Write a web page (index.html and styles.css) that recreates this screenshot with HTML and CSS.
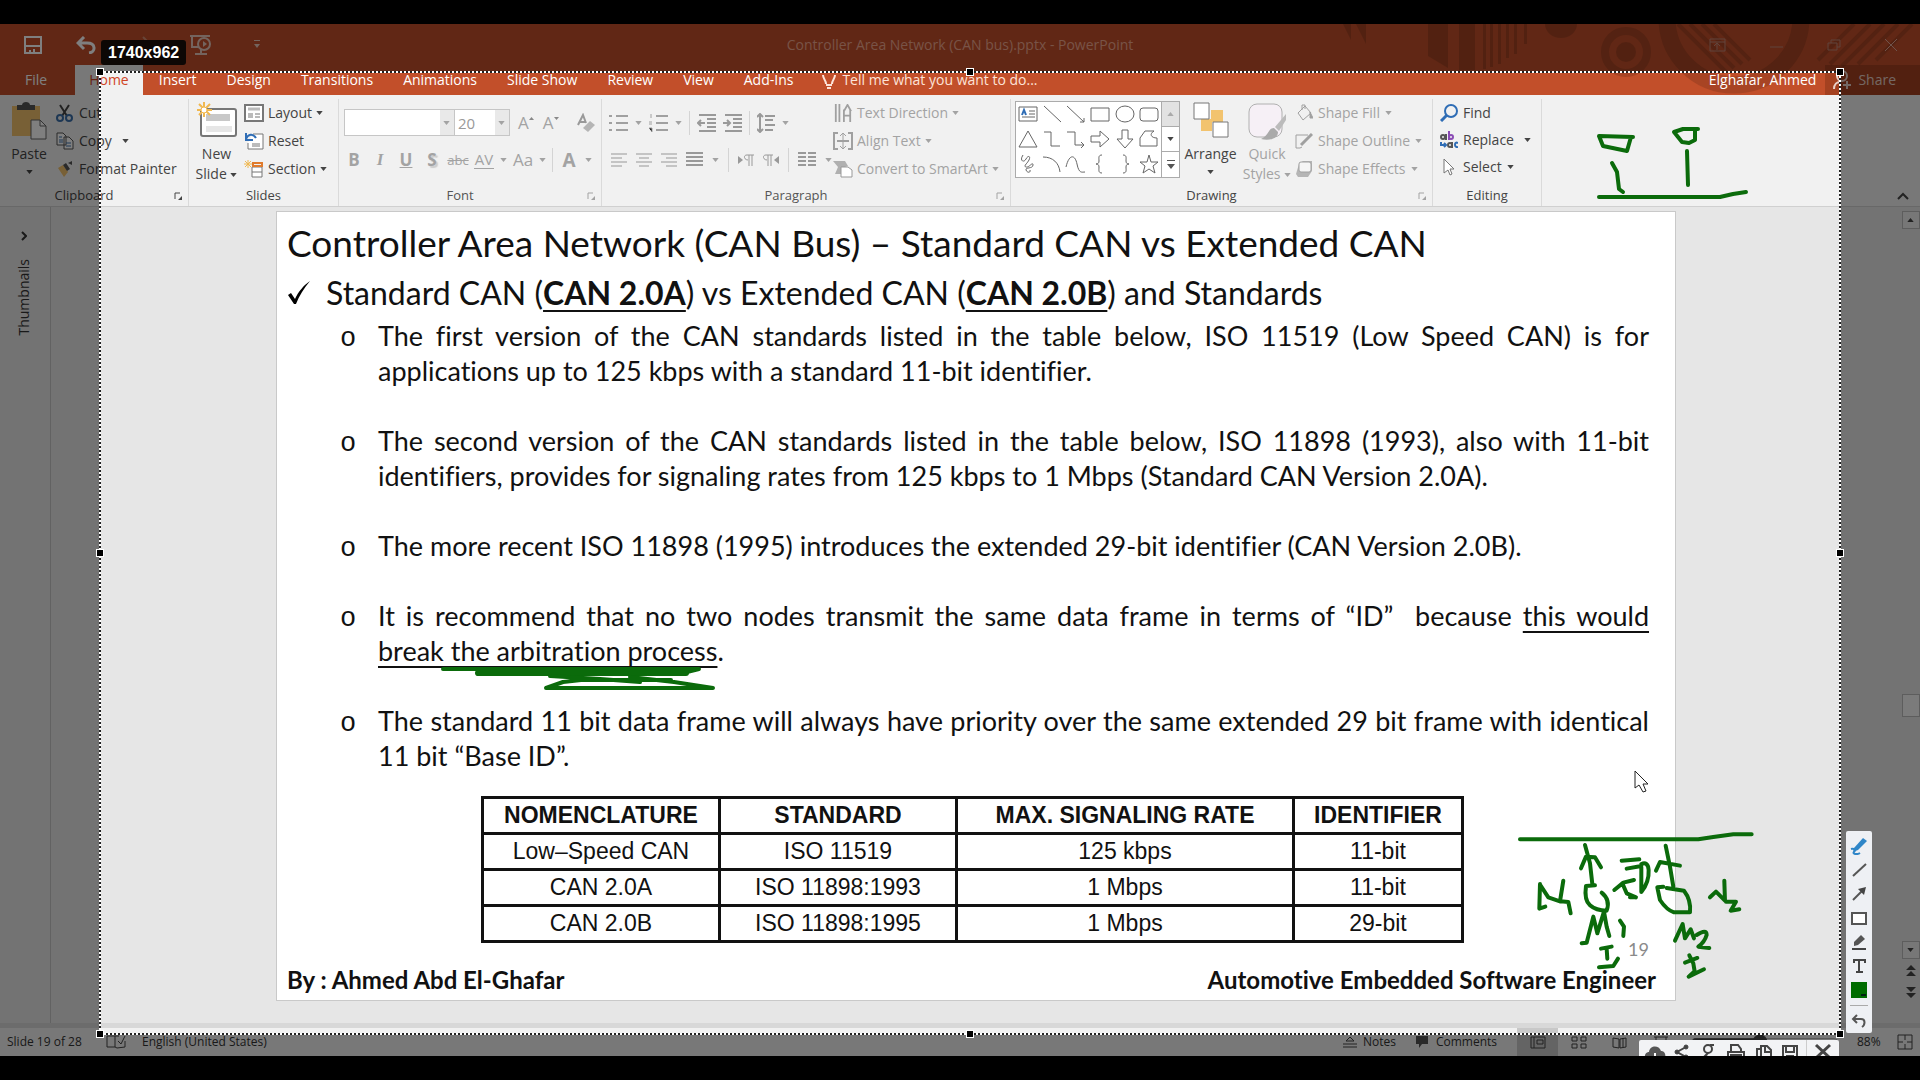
FILE: index.html
```html
<!DOCTYPE html>
<html lang="en">
<head>
<meta charset="utf-8">
<title>Controller Area Network (CAN bus).pptx - PowerPoint</title>
<link rel="stylesheet" href="styles.css">
</head>
<body>
<svg class="defs" aria-hidden="true">
  <symbol id="caret" viewBox="0 0 8 5"><path d="M0 0h8L4 5z" fill="currentColor"/></symbol>
  <symbol id="launcher" viewBox="0 0 8 8"><path d="M1 7V1h5" fill="none" stroke="currentColor"/><path d="M8 4v4H4z" fill="currentColor"/></symbol>
</svg>
<div class="app">
  <header class="titlebar">
    <svg class="decor" viewBox="0 0 600 71" width="600" height="71" aria-hidden="true">
      <g fill="#8f3a1f" opacity=".55">
        <path d="M23 0h8v16zM36 0h10v20zM108 0h20v44l-20-12zM139 0h16v46h-16z"/>
        <path d="M163 0h3v45h-3zM170 0h3v43h-3zM178 0h3v40h-3zM186 0h3v34h-3zM194 0h3v30h-3zM204 0h3v20h-3z"/>
        <path d="M225 0h32a16 14 0 0 1-32 0z"/>
        <circle cx="306" cy="28" r="10"/>
      </g>
      <g fill="none" stroke="#8f3a1f" opacity=".5">
        <circle cx="306" cy="28" r="21" stroke-width="8"/>
        <circle cx="414" cy="-6" r="67" stroke-width="17"/>
        <path d="M358 0l48 48M370 0l44 44M382 0l40 40M394 0l36 36M498 36l36-36M510 40l40-40M522 42l42-42M538 40l40-40M556 36l36-36" stroke-width="4"/>
      </g>
    </svg>
    <div class="caption">
      <div class="quick">
        <button aria-label="Save"><svg width="18" height="18" viewBox="0 0 18 18" fill="none" stroke="#fff" stroke-width="2"><path d="M1 1h16v16H1zM1 10h16"/><path d="M6 14v3M10 13v4" /></svg></button>
        <button aria-label="Undo"><svg width="20" height="18" viewBox="0 0 20 18" fill="none" stroke="#fff" stroke-width="3"><path d="M2 7h9c9 0 9 9 2 10M8 1L2 7l6 6"/></svg></button>
        <button aria-label="Redo"><svg width="20" height="18" viewBox="0 0 20 18" fill="none" stroke="#d08a70" stroke-width="2"><path d="M18 6H9c-8 0-8 9-2 10M13 1l5 5-5 5"/></svg></button>
        <button aria-label="Start from beginning"><svg width="22" height="20" viewBox="0 0 22 20" fill="none" stroke="#e8c8bc" stroke-width="2"><path d="M0 1h20M2 1v11h7M5 19h12M11 14v5"/><circle cx="14" cy="9" r="6"/><path d="M13 6l4 3-4 3z" fill="#e8c8bc" stroke="none"/></svg></button>
        <button aria-label="Customize toolbar"><svg width="6" height="9" viewBox="0 0 6 9"><path d="M0 0h6v1H0zM0 4h6L3 8z" fill="#e8c8bc"/></svg></button>
      </div>
      <div class="doc-name">Controller Area Network (CAN bus).pptx - PowerPoint</div>
      <div class="window-buttons">
        <button aria-label="Ribbon display options"><svg width="17" height="14" viewBox="0 0 17 14" fill="none" stroke="#c08878" stroke-width="1"><path d="M1 1h15v12H1zM1 4h15M8 12V6M5 8l3-3 3 3"/></svg></button>
        <button aria-label="Minimize"><svg width="13" height="14" viewBox="0 0 13 14" stroke="#c08878"><path d="M0 9h13"/></svg></button>
        <button aria-label="Restore"><svg width="14" height="14" viewBox="0 0 14 14" fill="none" stroke="#c08878"><path d="M1 5h9v7H1zM4 5V2h9v7h-3"/></svg></button>
        <button aria-label="Close"><svg width="12" height="12" viewBox="0 0 12 12" stroke="#e0a898"><path d="M0 0l12 12M12 0L0 12"/></svg></button>
      </div>
    </div>
    <nav class="tabs">
      <button class="tab file">File</button>
      <button class="tab active">Home</button>
      <button class="tab">Insert</button>
      <button class="tab">Design</button>
      <button class="tab">Transitions</button>
      <button class="tab">Animations</button>
      <button class="tab">Slide Show</button>
      <button class="tab">Review</button>
      <button class="tab">View</button>
      <button class="tab">Add-Ins</button>
      <button class="tab tell"><svg width="14" height="20" viewBox="0 0 14 20" fill="none" stroke="#fde3d8" stroke-width="2"><path d="M4 14c0-4-3-5-3-9M10 14c0-4 3-5 3-9M4 15h6M5 18h4"/></svg>Tell me what you want to do...</button>
      <span class="account">Elghafar, Ahmed</span>
      <button class="share"><svg width="18" height="20" viewBox="0 0 18 20" fill="none" stroke="#e8d0c8" stroke-width="2"><circle cx="9" cy="6" r="5"/><path d="M1 19c0-5 3-7 6-7M14 11v8M10 15h8"/></svg>Share</button>
    </nav>
  </header>

  <div class="ribbon">
    <section class="group g-clipboard">
      <div class="group-body">
        <button class="big"><svg width="35" height="38" viewBox="0 0 35 38"><path d="M0 4h28v30H0z" fill="#f0c06c"/><path d="M5 3h5c0-4 8-4 8 0h5v5H5z" fill="#555"/><path d="M19 18h9l6 6v13H19z" fill="#fff" stroke="#666" stroke-width="1"/><path d="M28 18v6h6" fill="none" stroke="#666"/></svg><span>Paste</span><svg class="caret"><use href="#caret"/></svg></button>
        <div class="stack">
          <button><svg class="ic" viewBox="0 0 18 18" fill="none" stroke="#444" stroke-width="2"><path d="M4 1l7 11M13 1L6 12"/><circle cx="4" cy="14" r="3" stroke="#3b6ea8"/><circle cx="13" cy="14" r="3" stroke="#3b6ea8"/></svg>Cut</button>
          <button><svg class="ic" viewBox="0 0 18 18" fill="#fff" stroke="#555"><path d="M1 1h6l3 3v9H1zM8 5h5l4 4v8H8z"/><path d="M3 5h3M3 8h4M3 10h4M10 11h5M10 14h5" stroke="#3b6ea8"/></svg>Copy<svg class="caret sp"><use href="#caret"/></svg></button>
          <button><svg class="ic" viewBox="0 0 18 18"><path d="M2 8l5-3 5 7-4 5z" fill="#f0c06c"/><path d="M7 5l3-2 4 6-3 2zM12 3l4-2v4z" fill="#555"/></svg>Format Painter</button>
        </div>
      </div>
      <footer class="has-launch"><span>Clipboard</span><svg class="launch"><use href="#launcher"/></svg></footer>
    </section>

    <section class="group g-slides">
      <div class="group-body">
        <button class="big"><svg width="40" height="38" viewBox="0 0 40 38" fill="none"><rect x="4" y="7" width="35" height="27" rx="2" fill="#fff" stroke="#777" stroke-width="2"/><path d="M9 12h24v7H9z" fill="#c8c8c8"/><path d="M9 24h26v6H9z" fill="#e6e6e6"/><path d="M7 0v15M0 8h15M2 2l11 11M13 2L2 13" stroke="#f0b850" stroke-width="2"/><circle cx="7" cy="8" r="3" fill="#fff" stroke="#f0b850"/></svg><span>New<br>Slide <svg class="caret"><use href="#caret"/></svg></span></button>
        <div class="stack">
          <button><svg class="ic w20" viewBox="0 0 20 18" fill="none" stroke="#777"><rect x="1" y="1" width="18" height="16" fill="#fff" stroke-width="2"/><path d="M4 5h12" stroke="#bbb" stroke-width="3"/><path d="M4 9h5v5H4z" fill="#bbb" stroke="none"/><path d="M11 10h5M11 13h5"/></svg>Layout<svg class="caret"><use href="#caret"/></svg></button>
          <button><svg class="ic w20" viewBox="0 0 20 18" fill="none" stroke="#777"><path d="M9 2h10v15H4v-6" fill="#fff" stroke-width="1"/><path d="M8 11h8v4H8z" fill="#bbb" stroke="none"/><path d="M2 1v7h7M2 7c2-5 7-6 10-1" stroke="#2f6db5" stroke-width="2"/></svg>Reset</button>
          <button><svg class="ic w20" viewBox="0 0 20 18" fill="none" stroke="#777"><path d="M8 7h10v10H8zM8 12h10" fill="#fff"/><path d="M9 3h9v3H9z" stroke="#e07b2c" stroke-width="2"/><path d="M4 0v8M0 4h8M1 1l6 6M7 1L1 7" stroke="#f0b850"/></svg>Section<svg class="caret"><use href="#caret"/></svg></button>
        </div>
      </div>
      <footer><span>Slides</span></footer>
    </section>

    <section class="group g-font off">
      <div class="tools">
        <div class="tool-row">
          <label class="combo wide"><input aria-label="Font name" value=""><svg class="caret"><use href="#caret"/></svg></label>
          <label class="combo"><input aria-label="Font size" value="20"><svg class="caret"><use href="#caret"/></svg></label>
          <button class="t grow" aria-label="Increase font size">A<svg width="5" height="3" viewBox="0 0 5 3"><path d="M0 3h5L2.500 0z" fill="#888"/></svg></button>
          <button class="t grow" aria-label="Decrease font size">A<svg width="5" height="3" viewBox="0 0 5 3"><path d="M0 0h5L2.500 3z" fill="#888"/></svg></button>
          <i class="bar"></i>
          <button class="t" aria-label="Clear formatting"><svg width="18" height="20" viewBox="0 0 18 20"><path d="M1 12L6 2l3 8M2 9h6" fill="none" stroke="#999" stroke-width="2"/><path d="M6 15l7-7 5 4-7 7z" fill="#b5b5b5"/></svg></button>
        </div>
        <div class="tool-row letters">
          <button class="l"><b>B</b></button>
          <button class="l serif"><b><i>I</i></b></button>
          <button class="l"><b><u>U</u></b></button>
          <button class="l shadow"><b>S</b></button>
          <button class="l small"><s>abc</s></button>
          <button class="l av">AV</button><svg class="caret"><use href="#caret"/></svg>
          <button class="l">Aa</button><svg class="caret"><use href="#caret"/></svg>
          <i class="bar"></i>
          <button class="l fc"><b>A</b></button><svg class="caret"><use href="#caret"/></svg>
        </div>
      </div>
      <footer class="has-launch"><span>Font</span><svg class="launch"><use href="#launcher"/></svg></footer>
    </section>

    <section class="group g-para off">
      <div class="group-body">
        <div class="tools">
          <div class="tool-row icons">
            <svg width="19" height="18" viewBox="0 0 19 18" stroke="#a0a0a0" stroke-width="2"><path d="M0 2h3M7 2h12M0 9h3M7 9h12M0 16h3M7 16h12"/></svg><svg class="caret"><use href="#caret"/></svg>
            <svg width="19" height="18" viewBox="0 0 19 18" stroke="#a0a0a0" stroke-width="2"><path d="M7 2h12M7 9h12M7 16h12"/><path d="M2 0v4M0 8h3M0 10h3M0 14h3v4" stroke-width="1"/></svg><svg class="caret"><use href="#caret"/></svg>
            <i class="bar"></i>
            <svg width="19" height="18" viewBox="0 0 19 18" fill="none" stroke="#999" stroke-width="2"><path d="M2 1h17M10 5h9M10 9h9M10 13h9M2 17h17M8 9H1M4 6L1 9l3 3"/></svg>
            <svg width="19" height="18" viewBox="0 0 19 18" fill="none" stroke="#999" stroke-width="2"><path d="M2 1h17M10 5h9M10 9h9M10 13h9M2 17h17M0 9h7M4 6l3 3-3 3"/></svg>
            <i class="bar"></i>
            <svg width="18" height="20" viewBox="0 0 18 20" fill="none" stroke="#999" stroke-width="2"><path d="M8 3h10M8 7h8M8 12h10M8 17h8M3 1v18M0 4l3-3 3 3M0 16l3 3 3-3"/></svg><svg class="caret"><use href="#caret"/></svg>
          </div>
          <div class="tool-row icons second">
            <svg width="16" height="14" viewBox="0 0 16 14" stroke="#c4c4c4" stroke-width="2"><path d="M0 1h16M0 5h11M0 9h16M0 13h11"/></svg>
            <svg width="16" height="14" viewBox="0 0 16 14" stroke="#c4c4c4" stroke-width="2"><path d="M0 1h16M3 5h10M0 9h16M3 13h10"/></svg>
            <svg width="16" height="14" viewBox="0 0 16 14" stroke="#c4c4c4" stroke-width="2"><path d="M0 1h16M5 5h11M0 9h16M5 13h11"/></svg>
            <svg width="17" height="15" viewBox="0 0 17 15" stroke="#999" stroke-width="2"><path d="M0 1h17M0 5h17M0 9h17M0 13h17"/></svg><svg class="caret"><use href="#caret"/></svg>
            <i class="bar"></i>
            <svg width="16" height="12" viewBox="0 0 16 12"><path d="M0 2l5 4-5 4z" fill="#999"/><path d="M11 12V1M14 12V1M16 1H9c-4 0-3 5 1 5" stroke="#999" fill="none"/></svg>
            <svg width="16" height="12" viewBox="0 0 16 12"><path d="M16 2l-5 4 5 4z" fill="#999"/><path d="M5 12V1M8 12V1M10 1H3c-4 0-3 5 1 5" stroke="#999" fill="none"/></svg>
            <i class="bar"></i>
            <svg width="18" height="15" viewBox="0 0 18 15" stroke="#999" stroke-width="2"><path d="M0 1h8M0 5h8M0 9h8M0 13h8M10 1h8M10 5h8M10 9h8M10 13h8"/></svg><svg class="caret"><use href="#caret"/></svg>
          </div>
        </div>
        <div class="stack">
          <button><svg class="ic w20" viewBox="0 0 20 20" fill="none" stroke="#a0a0a0"><path d="M2 0v20M6 0v20M11 6v14M18 6v14M11 13h7M11 8l4-7 4 7" stroke-width="2"/></svg>Text Direction<svg class="caret"><use href="#caret"/></svg></button>
          <button><svg class="ic w20" viewBox="0 0 20 18" fill="none" stroke="#a0a0a0"><path d="M5 1H1v16h4M15 1h4v16h-4M4 9h12" stroke-width="2"/><path d="M10 1v16M7 4l3-3 3 3M7 14l3 3 3-3"/></svg>Align Text<svg class="caret"><use href="#caret"/></svg></button>
          <button><svg class="ic w20" viewBox="0 0 20 18"><path d="M0 1h12l3 5-6 2v6H2L5 7z" fill="#b0b0b0"/><path d="M8 7h7l4 3v7H8z" fill="#fff" stroke="#999"/></svg>Convert to SmartArt<svg class="caret"><use href="#caret"/></svg></button>
        </div>
      </div>
      <footer class="has-launch"><span>Paragraph</span><svg class="launch"><use href="#launcher"/></svg></footer>
    </section>

    <section class="group g-draw">
      <div class="group-body">
        <div class="gallery">
          <div class="shapes">
            <svg viewBox="0 0 24 24"><path d="M3 5h18v14H3z" /><path d="M13 9h6M13 12h6M6 15h13"/><path d="M6 13l2-5 2 5" stroke="#2f6db5" stroke-width="2"/></svg>
            <svg viewBox="0 0 24 24"><path d="M4 4l17 16"/></svg>
            <svg viewBox="0 0 24 24"><path d="M3 4l17 16M20 16v4h-4"/></svg>
            <svg viewBox="0 0 24 24"><path d="M3 6h18v13H3z"/></svg>
            <svg viewBox="0 0 24 24"><ellipse cx="12" cy="12" rx="9" ry="8"/></svg>
            <svg viewBox="0 0 24 24"><rect x="3" y="6" width="18" height="13" rx="3"/></svg>
            <svg viewBox="0 0 24 24"><path d="M12 4l9 16H3z"/></svg>
            <svg viewBox="0 0 24 24"><path d="M4 5h7v14h9"/></svg>
            <svg viewBox="0 0 24 24"><path d="M3 5h8v13h9M17 15l3 3-3 3"/></svg>
            <svg viewBox="0 0 24 24"><path d="M3 9h9V4l9 8-9 8v-5H3z"/></svg>
            <svg viewBox="0 0 24 24"><path d="M9 3v9H4l8 9 8-9h-5V3z"/></svg>
            <svg viewBox="0 0 24 24"><path d="M3 19V11l5-7h9c-5 3-3 7 3 7v8z"/></svg>
            <svg viewBox="0 0 24 24"><path d="M7 3c-4 6 1 8 3 4s5-3 3 1-6 6-3 7 7-6 7-2-8 2-7 5 5 3 4 0"/></svg>
            <svg viewBox="0 0 24 24"><path d="M3 5c10 0 16 6 17 15"/></svg>
            <svg viewBox="0 0 24 24"><path d="M2 15C5 2 11 2 13 12s5 8 8 8"/></svg>
            <svg viewBox="0 0 24 24"><path d="M14 3c-4 0-3 3-3 6 0 2-1 3-3 3 2 0 3 1 3 3 0 3-1 6 3 6"/></svg>
            <svg viewBox="0 0 24 24"><path d="M10 3c4 0 3 3 3 6 0 2 1 3 3 3-2 0-3 1-3 3 0 3 1 6-3 6"/></svg>
            <svg viewBox="0 0 24 24"><path d="M12 3l2 7h7l-5 4 2 7-6-4-6 4 2-7-5-4h7z"/></svg>
          </div>
          <div class="gallery-scroll">
            <button aria-label="Scroll up" disabled><svg class="caret flip"><use href="#caret"/></svg></button>
            <button aria-label="Scroll down"><svg class="caret"><use href="#caret"/></svg></button>
            <button aria-label="More shapes"><svg width="8" height="9" viewBox="0 0 8 9"><path d="M0 0h8v1H0zM0 4h8L4 9z" fill="#555"/></svg></button>
          </div>
        </div>
        <button class="big arrange"><svg width="36" height="38" viewBox="0 0 36 38"><path d="M18 8h12v12H18zM8 17h11v12H8z" fill="#f2c36e"/><path d="M1 1h15v16H1zM20 20h15v15H20z" fill="#fff" stroke="#777"/></svg><span>Arrange</span><svg class="caret"><use href="#caret"/></svg></button>
        <button class="big quickstyles off"><svg width="40" height="38" viewBox="0 0 40 38"><rect x="2" y="2" width="33" height="33" rx="8" fill="#f6f0f6" stroke="#b0b0b0"/><path d="M39 12L28 25l4 4 7-11z" fill="#bbb"/><path d="M27 26c-6 0-5 8-13 11 8 2 17 0 17-7z" fill="#aaa"/></svg><span>Quick<br>Styles <svg class="caret"><use href="#caret"/></svg></span></button>
        <div class="stack off">
          <button><svg class="ic" viewBox="0 0 18 18" fill="none" stroke="#a0a0a0"><path d="M3 9l7-7 6 7-8 7zM7 6V1h3v4"/><path d="M15 8l3 6h-3z" fill="#a0a0a0"/></svg>Shape Fill<svg class="caret"><use href="#caret"/></svg></button>
          <button><svg class="ic" viewBox="0 0 18 18" fill="none" stroke="#a0a0a0"><path d="M13 3H1v13h4l2-1"/><path d="M6 13L17 2" stroke-width="3"/></svg>Shape Outline<svg class="caret"><use href="#caret"/></svg></button>
          <button><svg class="ic" viewBox="0 0 18 18"><path d="M4 4l4-3h9v10l-4 6H3L1 14z" fill="#b5b5b5"/><rect x="4" y="2" width="12" height="10" rx="2" fill="#f5f5f5" stroke="#a0a0a0"/></svg>Shape Effects<svg class="caret"><use href="#caret"/></svg></button>
        </div>
      </div>
      <footer class="has-launch"><span>Drawing</span><svg class="launch dim"><use href="#launcher"/></svg></footer>
    </section>

    <section class="group g-edit">
      <div class="group-body">
        <div class="stack">
          <button><svg class="ic" viewBox="0 0 18 18" fill="none" stroke="#2f6db5" stroke-width="2"><circle cx="11" cy="7" r="6"/><path d="M7 11l-6 6" stroke-width="3"/></svg>Find</button>
          <button><svg class="ic" viewBox="0 0 18 18" fill="none" stroke-width="2"><g stroke="#555"><circle cx="3" cy="6" r="2"/><path d="M6 3v6"/><circle cx="10" cy="14" r="2"/><path d="M12 11v6"/></g><path d="M9 0v9" stroke="#8a4bb5"/><circle cx="11" cy="6" r="2" stroke="#8a4bb5"/><path d="M18 12c-4-2-4 5 0 4" stroke="#2f6db5"/><path d="M1 11v3h5M4 12l2 2-2 2" stroke="#2f6db5"/></svg>Replace<svg class="caret sp"><use href="#caret"/></svg></button>
          <button><svg class="ic" viewBox="0 0 18 18"><path d="M4 1v14l4-3 2 5 2-1-2-5h4z" fill="#fff" stroke="#777"/></svg>Select<svg class="caret"><use href="#caret"/></svg></button>
        </div>
      </div>
      <footer><span>Editing</span></footer>
    </section>
    <button class="collapse" aria-label="Collapse the ribbon"><svg width="12" height="8" viewBox="0 0 12 8" fill="none" stroke="#444" stroke-width="2"><path d="M1 7l5-5 5 5"/></svg></button>
  </div>

  <main class="workspace">
    <aside class="thumbs">
      <svg width="6" height="10" viewBox="0 0 6 10" fill="none" stroke="#333" stroke-width="2"><path d="M1 1l4 4-4 4"/></svg>
      <span>Thumbnails</span>
    </aside>
    <div class="stage">
      <article class="slide">
        <h1>Controller Area Network (CAN Bus) – Standard CAN vs Extended CAN</h1>
        <h2><svg width="24" height="24" viewBox="0 0 24 24" aria-hidden="true"><path d="M1 14l3-2 4 6C11 11 17 4 23 0 17 7 12 15 9 23H7z"/></svg><span>Standard CAN (<b>CAN 2.0A</b>) vs Extended CAN (<b>CAN 2.0B</b>) and Standards</span></h2>
        <ul>
          <li>The first version of the CAN standards listed in the table below, ISO 11519 (Low Speed CAN) is for applications up to 125 kbps with a standard 11-bit identifier.</li>
          <li>The second version of the CAN standards listed in the table below, ISO 11898 (1993), also with 11-bit identifiers, provides for signaling rates from 125 kbps to 1 Mbps (Standard CAN Version 2.0A).</li>
          <li>The more recent ISO 11898 (1995) introduces the extended 29-bit identifier (CAN Version 2.0B).</li>
          <li>It is recommend that no two nodes transmit the same data frame in terms of “ID”&nbsp; because <u>this would break&nbsp;the arbitration process</u>.</li>
          <li>The standard 11 bit data frame will always have priority over the same extended 29 bit frame with identical 11 bit “Base ID”.</li>
        </ul>
        <table>
          <colgroup><col class="c1"><col class="c1"><col class="c3"><col class="c4"></colgroup>
          <thead><tr><th>NOMENCLATURE</th><th>STANDARD</th><th>MAX. SIGNALING RATE</th><th>IDENTIFIER</th></tr></thead>
          <tbody>
            <tr><td>Low–Speed CAN</td><td>ISO 11519</td><td>125 kbps</td><td>11-bit</td></tr>
            <tr><td>CAN 2.0A</td><td>ISO 11898:1993</td><td>1 Mbps</td><td>11-bit</td></tr>
            <tr><td>CAN 2.0B</td><td>ISO 11898:1995</td><td>1 Mbps</td><td>29-bit</td></tr>
          </tbody>
        </table>
        <div class="page-no">19</div>
        <div class="byline"><span>By : Ahmed Abd El-Ghafar</span><span>Automotive Embedded Software Engineer</span></div>
      </article>
    </div>
    <div class="scroll">
      <button aria-label="Scroll up"><svg class="caret flip"><use href="#caret"/></svg></button>
      <div class="track"><div class="thumb"></div></div>
      <button aria-label="Scroll down"><svg class="caret"><use href="#caret"/></svg></button>
      <button class="plain" aria-label="Previous slide"><svg width="10" height="11" viewBox="0 0 10 11"><path d="M0 5l5-5 5 5zM0 11l5-5 5 5z" fill="#444"/></svg></button>
      <button class="plain" aria-label="Next slide"><svg width="10" height="11" viewBox="0 0 10 11"><path d="M0 0h10L5 5zM0 6h10l-5 5z" fill="#444"/></svg></button>
    </div>
  </main>

  <footer class="status">
    <span class="count">Slide 19 of 28</span>
    <svg width="20" height="14" viewBox="0 0 20 14" fill="none" stroke="#444" stroke-width="1"><path d="M1 1h8v11H1zM9 12l2 1 8-1V6M9 1h4M12 6l3 3 4-8" /></svg>
    <span class="lang">English (United States)</span>
    <div class="status-right">
      <button class="notes"><svg width="14" height="12" viewBox="0 0 14 12" fill="none" stroke="#444"><path d="M0 8h14M0 11h14M3 5l4-4 4 4z"/></svg>Notes</button>
      <button class="comments"><svg width="14" height="13" viewBox="0 0 14 13"><path d="M0 0h12v8H6l-3 4V8H0z" fill="#555"/></svg>Comments</button>
      <button class="view on" aria-label="Normal"><svg width="16" height="13" viewBox="0 0 16 13" fill="none" stroke="#444"><path d="M1 1h14v11H1zM4 1v11M7 4h6v4H7z"/></svg></button>
      <button class="view" aria-label="Slide sorter"><svg width="16" height="13" viewBox="0 0 16 13" fill="none" stroke="#444"><path d="M1 1h5v4H1zM10 1h5v4h-5zM1 8h5v4H1zM10 8h5v4h-5z"/></svg></button>
      <button class="view" aria-label="Reading view"><svg width="16" height="13" viewBox="0 0 16 13" fill="none" stroke="#444"><path d="M1 2l6 1v9l-6-1zM14 2L8 3v9l6-1zM11 2v9"/></svg></button>
      <button class="view" aria-label="Slide show"><svg width="14" height="13" viewBox="0 0 14 13" fill="none" stroke="#444"><path d="M0 1h14M2 1v7h10V1M7 8v4"/></svg></button>
      <input type="range" class="zoom" aria-label="Zoom" min="10" max="180" value="88">
      <span class="pct">88%</span>
      <button class="fit" aria-label="Fit to window"><svg width="16" height="16" viewBox="0 0 16 16" fill="none" stroke="#444"><path d="M1 1h14v14H1zM8 1v5M8 10v5M1 8h5M10 8h5"/></svg></button>
    </div>
  </footer>

  <svg class="ink" viewBox="0 24 1920 1032" aria-hidden="true">
    <g fill="none" stroke="#0b6b0b" stroke-width="4" stroke-linecap="round" stroke-linejoin="round">
      <path d="M1633 137l-34-1 4 10 24 5 4-14M1612 163l5 9 2 17 4 3M1698 129h-15l-9 3 8 10 7 1 6-3V131M1687 151l1 34M1599 197h121l13-3 13-2"/>
      <path d="M443 669h256l-20 5H478l205-2" />
      <path d="M478 673h208" stroke-width="6"/>
      <path d="M550 676l50 3 40 3M630 677l44 5 39 6H546l17-6 18-2h90"/>
    </g>
    <g transform="translate(1480 760) scale(.3333)" fill="none" stroke="#0b6b0b" stroke-width="12" stroke-linecap="round" stroke-linejoin="round">
      <path d="M120 238H655L700 231 760 223H815"/>
      <path d="M315 255L330 310 337 372M303 325L318 290 345 292 363 322M345 376L318 378Q312 420 330 436T380 452Q392 420 365 398"/>
      <path d="M180 372L178 446 196 440M180 374L205 412 240 424 250 362M242 424L265 426 272 460"/>
      <path d="M425 302L478 298M440 326L484 318M403 390L430 368 462 360M428 372L440 400 468 412M450 412H466M484 322L484 396Q508 366 506 330 504 304 484 312"/>
      <path d="M557 257L570 320 580 380M528 332L540 306 600 317M550 380L532 382 540 420Q560 450 582 457H630Q634 420 612 392L560 384"/>
      <path d="M690 412L708 395 735 422 733 362M738 425L768 425 752 452 778 448"/>
      <path d="M305 550L320 548 340 470 352 520 372 455 380 500 388 528M420 482L432 500 430 528"/>
      <path d="M363 566L395 560M380 566L382 596M357 622L400 618 414 596"/>
      <path d="M585 542L608 492 615 535 632 508 642 535M650 525Q680 505 680 525 674 546 655 560L688 564"/>
      <path d="M615 608L652 594M628 586L640 610 644 634 626 650 672 628"/>
    </g>
    <path d="M1635 771v17l4-3 4 7 3-1-3-7h5z" fill="#fff" stroke="#222"/>
  </svg>

  <div class="selection">
    <i class="edge h top"></i><i class="edge h bottom"></i><i class="edge v left"></i><i class="edge v right"></i>
    <i class="knob tl"></i><i class="knob tc"></i><i class="knob tr"></i><i class="knob ml"></i><i class="knob mr"></i><i class="knob bl"></i><i class="knob bc"></i><i class="knob br"></i>
    <span class="size-badge">1740x962</span>
    <div class="draw-tools">
      <button aria-label="Pen"><svg viewBox="0 0 18 18"><path d="M4 11L13 1l4 3-9 9-5 2z" fill="#2f86c8"/><path d="M1 12c3-1 5 1 3 3s3 3 6 1" fill="none" stroke="#2f86c8" stroke-width="2"/></svg></button>
      <button aria-label="Line"><svg viewBox="0 0 18 18"><path d="M3 15L16 3" stroke="#555" stroke-width="2"/></svg></button>
      <button aria-label="Arrow"><svg viewBox="0 0 18 18"><path d="M3 15L13 5" stroke="#555" stroke-width="2"/><path d="M8 4l8-2-2 8z" fill="#444"/></svg></button>
      <button aria-label="Rectangle"><svg viewBox="0 0 18 18"><path d="M2 4h14v11H2z" fill="#fff" stroke="#555" stroke-width="2"/></svg></button>
      <button aria-label="Marker"><svg viewBox="0 0 18 18"><path d="M4 9l7-7 4 4-7 6-4 1z" fill="#555"/><path d="M2 16h14" stroke="#444" stroke-width="2"/></svg></button>
      <button aria-label="Text"><svg viewBox="0 0 18 18"><path d="M4 6V3h11v3M9 3v12M6 15h7" fill="none" stroke="#444" stroke-width="2"/></svg></button>
      <button aria-label="Color"><svg viewBox="0 0 18 18"><path d="M1 1h16v16H1z" fill="#006c00"/><path d="M11 13h5v2h-5z" fill="#021"/></svg></button>
      <hr>
      <button aria-label="Undo"><svg viewBox="0 0 18 18"><path d="M3 7h8c5 0 4 6 1 8M7 3L3 7l4 4" fill="none" stroke="#555" stroke-width="2"/></svg></button>
    </div>
    <div class="save-tools">
      <button aria-label="Upload"><svg viewBox="0 0 22 18"><path d="M1 18c-1-6 4-6 4-6 1-7 10-7 12-1 4 0 5 4 4 7z" fill="#555"/><path d="M11 18v-5" stroke="#fff" stroke-width="2"/></svg></button>
      <button aria-label="Share"><svg viewBox="0 0 22 18" fill="#444" stroke="#444"><circle cx="15" cy="7" r="2"/><circle cx="6" cy="12" r="2"/><circle cx="15" cy="17" r="2"/><path d="M15 7l-9 5 9 5" fill="none" stroke-width="2"/></svg></button>
      <button aria-label="Search"><svg viewBox="0 0 22 18" fill="none" stroke="#444" stroke-width="2"><circle cx="10" cy="9" r="4"/><path d="M12 5h4M10 13l-3 3 6 2"/></svg></button>
      <button aria-label="Print"><svg viewBox="0 0 22 18" fill="none" stroke="#444" stroke-width="2"><path d="M6 11V5h7l3 4v2M3 18v-6h16v6M5 15h12"/></svg></button>
      <button aria-label="Copy"><svg viewBox="0 0 22 18" fill="none" stroke="#444" stroke-width="2"><path d="M5 18V9h4M9 18V6h6l4 4v8M13 6v6h6"/></svg></button>
      <button aria-label="Save"><svg viewBox="0 0 22 18" fill="none" stroke="#444" stroke-width="2"><path d="M4 18V6h14v12M7 6v6h8V6M7 16h8"/></svg></button>
      <i></i>
      <button aria-label="Close"><svg viewBox="0 0 22 18" stroke="#444" stroke-width="3"><path d="M4 5l14 13M18 5L4 18"/></svg></button>
    </div>
  </div>
</div>
</body>
</html>
```
FILE: styles.css
```css
* { box-sizing: border-box; }
body {
  margin: 0;
  padding: 24px 0;
  background: #000;
  font: 14px/20px "Open Sans", "Noto Sans", sans-serif;
  color: #444;
}
button {
  margin: 0;
  padding: 0;
  border: 0;
  background: none;
  font: inherit;
  color: inherit;
  display: inline-flex;
  align-items: center;
}
svg { flex: none; display: block; }
.defs { position: absolute; width: 0; height: 0; }
.app { position: relative; overflow: hidden; background: #e6e6e6; }

/* title bar */
.titlebar { position: relative; background: #c24f2a; color: #fff; }
.decor { position: absolute; right: 0; top: 0; }
.caption {
  position: relative;
  display: grid;
  grid-template-columns: 1fr auto 1fr;
  align-items: center;
  height: 41px;
}
.quick { display: flex; align-items: center; padding-left: 24px; }
.quick button { margin-right: 34px; }
.quick button:nth-child(3) { margin-right: 40px; }
.quick button:nth-child(4) { margin-right: 42px; }
.doc-name { color: #f0a68e; font-size: 14px; }
.window-buttons { display: flex; justify-content: flex-end; gap: 44px; padding-right: 23px; }
.tabs { position: relative; display: flex; gap: 2px; height: 30px; }
.tab { padding: 0 14px; }
.tab.file { padding: 0 26px 0 25px; }
.tab.active { background: #f1f1f1; color: #d04526; }
.tab.tell { gap: 6px; padding-left: 13px; color: #fde3d8; }
.account { margin-left: auto; padding-right: 7px; line-height: 30px; }
.share { background: rgba(110, 40, 15, .35); gap: 7px; padding: 0 24px 0 8px; color: #e8d0c8; }

/* ribbon */
.ribbon {
  display: flex;
  padding: 4px 0 0;
  background: #f1f1f1;
  border-bottom: 1px solid #d0d0d0;
}
.group { display: flex; flex-direction: column; height: 107px; padding-bottom: 0; border-right: 1px solid #dadada; }
.group-body { display: flex; height: 85px; }
.group > footer { position: relative; text-align: center; font-size: 13px; line-height: 22px; }
.group > .has-launch { padding-right: 20px; }
.off { color: #a3a3a3; }
.off footer span { color: #555; }
.g-clipboard { width: 189px; }
.g-slides { width: 150px; }
.g-font { width: 263px; }
.g-para { width: 409px; }
.g-draw { width: 422px; }
.g-edit { width: 109px; }
.launch { position: absolute; right: 6px; top: 8px; width: 8px; height: 8px; }
.dim { color: #a3a3a3; }
.caret { width: 7px; height: 4px; display: inline-block; vertical-align: middle; }
.flip { transform: rotate(180deg); }
.big { flex-direction: column; width: 58px; padding-top: 3px; line-height: 20px; text-align: center; }
.big > svg:first-child { margin-bottom: 4px; }
.big > .caret { margin-top: 6px; }
.stack button { display: flex; height: 28px; gap: 5px; white-space: nowrap; }
.stack .sp { margin-left: 5px; }
.ic { width: 18px; height: 18px; }
.w20 { width: 20px; }
.g-clipboard .big { width: 56px; padding-left: 2px; }
.g-slides .big { width: 55px; }
.g-slides .stack button, .g-para .stack button { gap: 4px; }

.tools { height: 85px; padding-top: 10px; }
.tool-row { display: flex; align-items: center; height: 27px; }
.tool-row + .tool-row { margin-top: 10px; }
.g-font .tool-row { padding-left: 5px; }
.combo { display: flex; align-items: center; width: 56px; height: 27px; margin-right: 8px; padding-right: 4px; border: 1px solid #c6c6c6; background: linear-gradient(90deg, #fff 0 calc(100% - 14px), #e9e9e9 0); }
.combo.wide { width: 110px; margin-right: 0; border-right: 0; }
.combo input { flex: 1; min-width: 0; height: 25px; padding: 0 3px; border: 0; background: none; font: inherit; font-size: 15px; color: #999; }
.t { margin-right: 9px; font-size: 17px; }
.grow svg { align-self: flex-start; margin-top: 4px; }
.bar { width: 1px; height: 24px; background: #d4d4d4; }
.t + .bar { margin-right: 9px; }
.letters { gap: 6px; font-size: 17px; }
.l { justify-content: center; width: 20px; }
.serif { font-family: "Liberation Serif", serif; }
.shadow { text-shadow: 2px 2px 1px #ccc; }
.small { font-size: 13px; }
.av { font-size: 15px; border-bottom: 1px solid #a3a3a3; line-height: 18px; }
.fc { font-size: 19px; }
.g-para .tools { width: 231px; padding-left: 7px; }
.icons { gap: 7px; }
.icons.second { gap: 9px; padding-left: 2px; }

.gallery { display: flex; width: 165px; height: 77px; margin: 2px 0 0 4px; border: 1px solid #ababab; background: #fff; }
.shapes { flex: 1; display: grid; grid-template-columns: repeat(6, 1fr); grid-template-rows: repeat(3, 1fr); }
.shapes svg { width: 24px; height: 24px; fill: none; stroke: #666; stroke-width: 1; }
.gallery-scroll { width: 18px; display: grid; grid-template-rows: repeat(3, 1fr); border-left: 1px solid #ababab; }
.gallery-scroll button { justify-content: center; border-bottom: 1px solid #ababab; }
.gallery-scroll button:last-child { border-bottom: 0; }
.gallery-scroll button:disabled { background: #e2e2e2; color: #aaa; }
.arrange { width: 61px; }
.quickstyles { width: 52px; }
.g-draw .stack { padding-left: 2px; }
.g-edit .stack { padding-left: 7px; }
.g-edit .stack button { height: 27px; }
.collapse { align-self: flex-end; margin: 0 11px 6px auto; }

/* workspace */
.workspace { display: flex; border-bottom: 5px solid #d8d8d8; }
.thumbs { display: flex; flex-direction: column; align-items: center; gap: 18px; width: 51px; padding: 24px 2px 0 0; border-right: 1px solid #c4c4c4; color: #333; }
.thumbs span { writing-mode: vertical-rl; transform: rotate(180deg); }
.stage { flex: 1; padding: 4px 24px 22px; }
.slide {
  max-width: 1400px;
  margin: 0 auto;
  padding: 6px 26px 5px 10px;
  border: 1px solid #c9c9c9;
  background: #fff;
  color: #111;
  font-family: Lato, Carlito, sans-serif;
  font-variant-ligatures: none;
}
h1, h2 { margin: 0; font-weight: 400; line-height: 50px; white-space: nowrap; }
h1 { font-size: 37px; }
h2 { display: flex; align-items: center; gap: 15px; font-size: 32px; }
h2 b { text-decoration: underline; text-decoration-thickness: 2px; text-underline-offset: 5px; }
.slide ul { margin: 0; padding: 0 0 0 53px; list-style: none; font-size: 27px; line-height: 35px; }
.slide li { display: flow-root; position: relative; padding-left: 38px; text-align: justify; }
.slide li + li { margin-top: 35px; }
.slide li::before { content: "o"; position: absolute; left: 0; font-family: "Liberation Mono", monospace; line-height: 42px; }
.slide u { text-decoration-thickness: 2px; text-underline-offset: 5px; }
.slide table { width: 981px; margin: 23px 0 0 194px; border-collapse: collapse; table-layout: fixed; font: 23px/33px "Liberation Sans", Arial, sans-serif; }
.c1 { width: 237px; }
.c3 { width: 337px; }
.c4 { width: 169px; }
.slide th, .slide td { height: 36px; padding: 0; border: 3px solid #111; text-align: center; }
.page-no { text-align: right; font-size: 18px; line-height: 12px; color: #8a8a8a; }
.byline { display: flex; justify-content: space-between; margin: 10px -7px 0 0; font-size: 24px; line-height: 30px; font-weight: 700; }
.scroll { display: flex; flex-direction: column; align-items: center; width: 19px; padding: 4px 0 20px; }
.scroll button { width: 18px; height: 18px; justify-content: center; border: 1px solid #bbb; background: #efefef; }
.scroll .plain { height: 22px; border: 0; background: none; }
.track { flex: 1; width: 18px; display: flex; flex-direction: column; }
.thumb { height: 23px; margin-top: 465px; border: 1px solid #bbb; background: #f6f6f6; }

/* status bar */
.status { display: flex; align-items: center; height: 28px; padding: 0 7px; background: #f1f1f1; font-size: 12px; color: #333; }
.count { width: 99px; }
.lang { margin-left: 16px; }
.status-right { display: flex; align-items: center; height: 28px; margin-left: auto; }
.notes, .comments { gap: 6px; margin-right: 20px; }
.view { justify-content: center; width: 41px; height: 28px; }
.view.on { background: #c8c8c8; }
.zoom { width: 148px; height: 10px; margin: 0 18px 0 10px; accent-color: #444; }
.pct { width: 40px; }

/* ink and capture overlay */
.ink { position: absolute; inset: 0; width: 100%; height: 100%; pointer-events: none; }
.selection { position: absolute; inset: 48px 80px 22px 100px; box-shadow: 0 0 0 2000px rgba(0, 0, 0, .5); }
.edge { position: absolute; }
.h { left: 0; right: 0; height: 2px; background: repeating-linear-gradient(90deg, #fff 0 2px, #222 2px 4px); }
.v { top: 0; bottom: 0; width: 2px; background: repeating-linear-gradient(#fff 0 2px, #222 2px 4px); }
.top { top: -1px; }
.bottom { bottom: -1px; }
.left { left: -1px; }
.right { right: -1px; }
.knob { position: absolute; width: 8px; height: 8px; margin: -4px; border: 1px solid #fff; background: #000; }
.tl { left: 0; top: 0; }
.tc { left: 50%; top: 0; }
.tr { left: 100%; top: 0; }
.ml { left: 0; top: 50%; }
.mr { left: 100%; top: 50%; }
.bl { left: 0; top: 100%; }
.bc { left: 50%; top: 100%; }
.br { left: 100%; top: 100%; }
.size-badge { position: absolute; left: 1px; top: -32px; padding: 0 7px; border-radius: 3px; background: #0d0705; color: #fff; font: 700 16px/25px "Liberation Sans", Arial, sans-serif; }
.draw-tools { position: absolute; left: 100%; bottom: 1px; margin-left: 6px; width: 26px; display: flex; flex-direction: column; align-items: center; gap: 6px; padding: 6px 0 3px; border-radius: 2px; background: #eef0f4; }
.draw-tools svg { width: 18px; height: 18px; }
.draw-tools hr { width: 18px; height: 1px; margin: 0; border: 0; background: #aaa; }
.save-tools { position: absolute; right: 1px; top: 100%; margin-top: 6px; display: flex; gap: 5px; padding: 0 5px; height: 30px; border-radius: 2px; background: #f2f3f5; }
.save-tools svg { width: 22px; height: 18px; }
.save-tools button { align-items: flex-start; }
.save-tools i { width: 1px; background: #ccc; }
```
